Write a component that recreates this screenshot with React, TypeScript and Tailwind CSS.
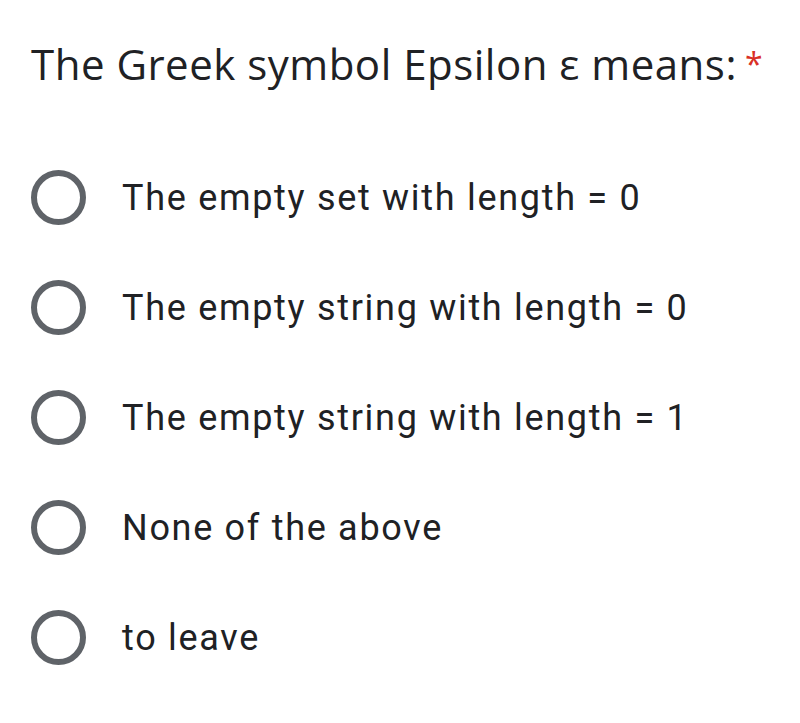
import React from 'react';

const options = [
    'The empty set with length = 0',
    'The empty string with length = 0',
    'The empty string with length = 1',
    'None of the above',
    'to leave',
];

function Radio() {
    return (
        <span className="box-border block h-[55px] w-[55px] shrink-0 rounded-full border-[6px] border-[#5f6368]" />
    );
}

export default function App() {
    return (
        <div className="h-[723px] w-[800px] bg-white text-[#202124]">
            <div className="flex pl-[31px] pt-[34px]">
                <h1 className="font-['Open_Sans',sans-serif] text-[42px] leading-[60px] tracking-[0.5px]">
                    The Greek symbol Epsilon ε means:
                    <span className="relative top-[8px] ml-2 align-top text-[32px] leading-[44px] text-[#d93025]">*</span>
                </h1>
            </div>
            <div className="mt-[76px] flex flex-col gap-[55px] pl-[31px]">
                {options.map((o) => (
                    <label key={o} className="flex h-[55px] items-center">
                        <Radio />
                        <span className="ml-[36px] font-['Roboto',sans-serif] text-[36px] leading-none tracking-[1.7px]">{o}</span>
                    </label>
                ))}
            </div>
        </div>
    );
}
